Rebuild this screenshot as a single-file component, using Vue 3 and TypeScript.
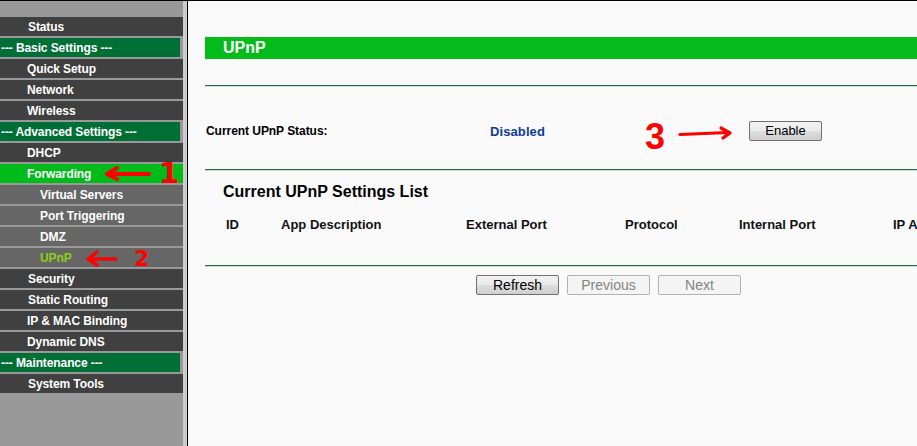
<script setup lang="ts">
interface MenuItem { label: string; kind: 'top' | 'head' | 'sub'; indent?: boolean; active?: boolean; current?: boolean }
const menu: MenuItem[] = [
  { label: 'Status', kind: 'top' },
  { label: '--- Basic Settings ---', kind: 'head' },
  { label: 'Quick Setup', kind: 'top', indent: true },
  { label: 'Network', kind: 'top', indent: true },
  { label: 'Wireless', kind: 'top', indent: true },
  { label: '--- Advanced Settings ---', kind: 'head' },
  { label: 'DHCP', kind: 'top', indent: true },
  { label: 'Forwarding', kind: 'top', indent: true, active: true },
  { label: 'Virtual Servers', kind: 'sub' },
  { label: 'Port Triggering', kind: 'sub' },
  { label: 'DMZ', kind: 'sub' },
  { label: 'UPnP', kind: 'sub', current: true },
  { label: 'Security', kind: 'top' },
  { label: 'Static Routing', kind: 'top' },
  { label: 'IP & MAC Binding', kind: 'top', indent: true },
  { label: 'Dynamic DNS', kind: 'top', indent: true },
  { label: '--- Maintenance ---', kind: 'head' },
  { label: 'System Tools', kind: 'top' },
]
const columns = ['ID', 'App Description', 'External Port', 'Protocol', 'Internal Port', 'IP Address']
</script>

<template>
  <div class="page">
    <aside class="sidebar">
      <div
        v-for="item in menu"
        :key="item.label"
        class="item"
        :class="[item.kind, { indent: item.indent, active: item.active, current: item.current }]"
      >{{ item.label }}</div>
    </aside>
    <main class="content">
      <div class="title">UPnP</div>
      <hr class="rule first" />
      <div class="status">
        <span class="status-label">Current UPnP Status:</span>
        <span class="status-value">Disabled</span>
        <button class="btn enable">Enable</button>
      </div>
      <hr class="rule second" />
      <h2 class="list-title">Current UPnP Settings List</h2>
      <div class="columns">
        <span v-for="c in columns" :key="c">{{ c }}</span>
      </div>
      <hr class="rule third" />
      <div class="actions">
        <button class="btn">Refresh</button>
        <button class="btn off">Previous</button>
        <button class="btn off">Next</button>
      </div>
    </main>

    <svg class="marks" width="917" height="446" viewBox="0 0 917 446" fill="none" stroke="#fe0000" stroke-linecap="round" stroke-linejoin="round">
      <path d="M149 174 L109 174 M117 168 L107 174 L117 179" stroke-width="4" />
      <path d="M116 259 L90 259 M97 252 L88 259 L97 265" stroke-width="3.4" />
      <path d="M680 134.5 L728 132.5 M721 128 L730 133 L723 138" stroke-width="3.2" />
    </svg>
    <span class="digit d1">1</span>
    <span class="digit d2">2</span>
    <span class="digit d3">3</span>
  </div>
</template>

<style>
html, body { margin: 0; padding: 0; overflow: hidden; }
</style>

<style scoped>
.page {
  position: relative;
  display: flex;
  width: 917px;
  height: 446px;
  overflow: hidden;
  box-sizing: border-box;
  border-top: 1px solid #000;
  background: #fafafa;
  font-family: "Liberation Sans", Arial, sans-serif;
}
.sidebar {
  flex: 0 0 183px;
  width: 183px;
  padding-top: 16px;
  background: #999;
  border-right: 4px solid #ccc;
}
.item {
  height: 19px;
  margin-bottom: 2px;
  line-height: 21px;
  font-size: 12px;
  font-weight: bold;
  letter-spacing: -0.1px;
  color: #fff;
  white-space: nowrap;
  background: #404040;
  padding-left: 28px;
}
.item.indent { padding-left: 27px; }
.item.head {
  width: 180px;
  padding-left: 1px;
  box-sizing: border-box;
  background: #006f36;
}
.item.sub { padding-left: 40px; background: #666; }
.item.active { background: #00bb1a; }
.item.current { color: #8fd016; }
.content {
  flex: 1;
  min-width: 0;
  border-left: 1px solid #000;
  padding-left: 17px;
  padding-top: 36px;
  overflow: hidden;
}
.title {
  height: 22px;
  line-height: 21px;
  width: 760px;
  padding-left: 18px;
  background: #03bc19;
  color: #fff;
  font-size: 16px;
  font-weight: bold;
}
.rule {
  margin: 0;
  height: 1px;
  width: 760px;
  border: 0;
  background: #1e6e46;
  box-shadow: 0 1px 0 #c9e2d4;
}
.rule.first { margin-top: 26px; }
.status {
  display: flex;
  align-items: center;
  height: 20px;
  margin-top: 35px;
  padding-left: 1px;
}
.status-label { width: 284px; font-size: 12px; font-weight: bold; letter-spacing: -0.05px; color: #000; }
.status-value { width: 259px; font-size: 13px; font-weight: bold; letter-spacing: 0.1px; color: #0f3c96; }
.rule.second { margin-top: 28px; }
.list-title {
  margin: 13px 0 0 18px;
  font-size: 16px;
  line-height: 18px;
  font-weight: bold;
  color: #000;
}
.columns {
  display: grid;
  grid-template-columns: 55px 185px 159px 114px 154px 120px;
  width: 787px;
  margin: 16px 0 0 21px;
  font-size: 13px;
  line-height: 15px;
  font-weight: bold;
  color: #111;
  white-space: nowrap;
}
.rule.third { margin-top: 33px; }
.actions {
  display: flex;
  gap: 8px;
  margin: 9px 0 0 271px;
}
.btn {
  width: 83px;
  height: 20px;
  padding: 0;
  box-sizing: border-box;
  border: 1px solid #707070;
  border-radius: 2px;
  background: linear-gradient(#f2f2f2 0, #ebebeb 48%, #dddddd 52%, #cfcfcf 100%);
  font-family: "Liberation Sans", Arial, sans-serif;
  font-size: 14px;
  line-height: 18px;
  color: #000;
}
.btn.enable { width: 73px; font-size: 13px; }
.btn.off {
  border-color: #adb2b5;
  background: #f4f4f4;
  color: #838383;
}
.marks { position: absolute; left: 0; top: -1px; pointer-events: none; }
.digit {
  position: absolute;
  color: #fe0000;
  font-weight: bold;
  line-height: 1;
}
.d1 { left: 159px; top: 158px; font-size: 29px; font-family: "DejaVu Sans", sans-serif; }
.d2 { left: 134px; top: 247px; font-size: 22px; font-family: "DejaVu Sans", sans-serif; }
.d3 { left: 645px; top: 118px; font-size: 36px; font-family: "Liberation Sans", sans-serif; }
</style>
